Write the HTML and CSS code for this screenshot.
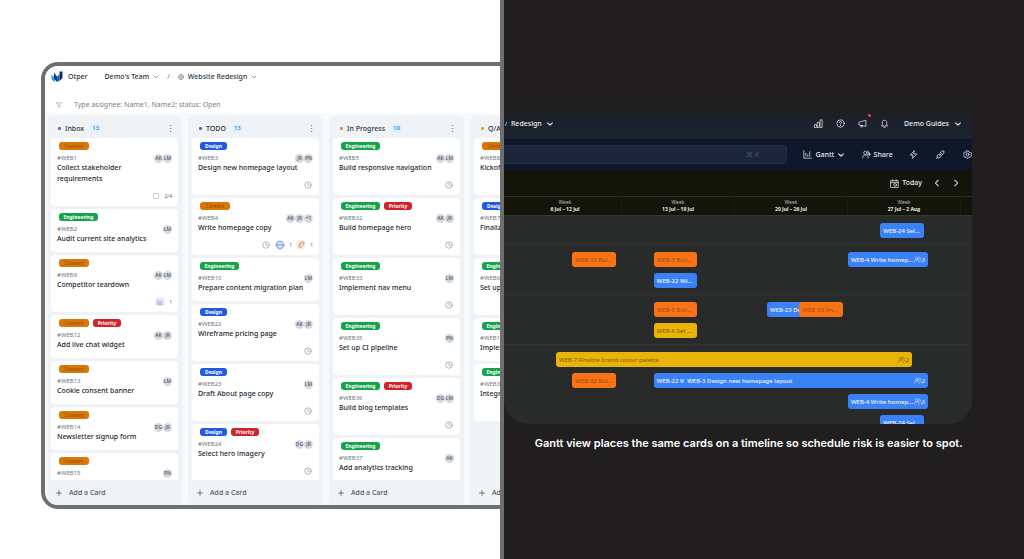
FILE: index.html
```html
<!DOCTYPE html>
<html lang="en">
<head>
<meta charset="utf-8">
<title>Otper – Board and Gantt views</title>
<link rel="stylesheet" href="styles.css">
</head>
<body>
<svg class="sprite" aria-hidden="true">
  <symbol id="chev" viewBox="0 0 10 10"><path d="M2 3.5 5 6.5 8 3.5"/></symbol>
  <symbol id="clock" viewBox="0 0 16 16"><circle cx="8" cy="8" r="6.5"/><path d="M8 4v4.5l3 1"/></symbol>
  <symbol id="plus" viewBox="0 0 10 10"><path d="M5 1v8M1 5h8"/></symbol>
  <symbol id="people" viewBox="0 0 20 16"><circle cx="7" cy="5" r="3.5"/><path d="M1 15c0-4 2-6 6-6s6 2 6 6M13 1.500c3 0 4 5 1 7 3 0 5 3 5 6"/></symbol>
</svg>
<main class="compare">
  <section class="light">
    <div class="board-app">
      <header class="topbar">
        <svg class="logo" viewBox="0 0 24 24"><path d="M1 7l7 6v9l-7-5z" fill="#2aa7e0"/><path d="M6 3l6 8v11l-6-7z" fill="#123a7c"/><path d="M12 11l5-4v12l-5 3z" fill="#1d63c9"/><path d="M17 1h6v13l-6 6z" fill="#0d2f66"/></svg>
        <strong class="brand">Otper</strong>
        <button class="crumb">Demo's Team <svg class="ico s6"><use href="#chev"/></svg></button>
        <span class="slash">/</span>
        <button class="crumb"><svg class="ico s6" viewBox="0 0 16 16"><circle cx="8" cy="8" r="7"/><path d="M1 8h14M8 1c-4 4-4 10 0 14M8 1c4 4 4 10 0 14"/></svg> Website Redesign <svg class="ico s6"><use href="#chev"/></svg></button>
      </header>
      <div class="filter">
        <svg class="ico s6" viewBox="0 0 16 16"><path d="M1 2h14l-5 6v6l-4-2V8z"/></svg>
        <input type="text" aria-label="Filter cards" placeholder="Type assignee: Name1, Name2; status: Open">
      </div>
      <div class="columns">
        <section class="column">
          <header><i class="mark indigo"></i><h2>Inbox</h2><span class="count">13</span><button class="more" aria-label="Inbox menu">⋮</button></header>
          <div class="cards">
            <article class="card"><div class="tags"><span class="tag content">Content</span></div><div class="meta">#WEB1<span class="people"><b>AK</b><b>LM</b></span></div><h3>Collect stakeholder<br>requirements</h3><footer><svg class="ico s6" viewBox="0 0 16 16"><rect x="1.500" y="1.500" width="13" height="13" rx="2"/></svg>2/4</footer></article>
            <article class="card"><div class="tags"><span class="tag eng">Engineering</span></div><div class="meta">#WEB2<span class="people"><b>LM</b></span></div><h3>Audit current site analytics</h3></article>
            <article class="card"><div class="tags"><span class="tag content">Content</span></div><div class="meta">#WEB9<span class="people"><b>AK</b><b>LM</b></span></div><h3>Competitor teardown</h3><footer><span class="badge violet"><svg class="ico s6" viewBox="0 0 16 16"><path d="M2 2v12h12M6 11V7M9 11V8M13 11V4"/></svg></span>1</footer></article>
            <article class="card"><div class="tags"><span class="tag content">Content</span><span class="tag prio">Priority</span></div><div class="meta">#WEB12<span class="people"><b>AK</b><b>JR</b></span></div><h3>Add live chat widget</h3></article>
            <article class="card"><div class="tags"><span class="tag content">Content</span></div><div class="meta">#WEB13<span class="people"><b>LM</b></span></div><h3>Cookie consent banner</h3></article>
            <article class="card"><div class="tags"><span class="tag content">Content</span></div><div class="meta">#WEB14<span class="people"><b>DG</b><b>JR</b></span></div><h3>Newsletter signup form</h3></article>
            <article class="card"><div class="tags"><span class="tag content">Content</span></div><div class="meta">#WEB15<span class="people"><b>PN</b></span></div></article>
          </div>
          <button class="add"><svg class="ico s6"><use href="#plus"/></svg>Add a Card</button>
        </section>
        <section class="column">
          <header><i class="mark slate"></i><h2>TODO</h2><span class="count">13</span><button class="more" aria-label="TODO menu">⋮</button></header>
          <div class="cards">
            <article class="card"><div class="tags"><span class="tag design">Design</span></div><div class="meta">#WEB3<span class="people"><b>JR</b><b>PN</b></span></div><h3>Design new homepage layout</h3><footer><svg class="ico s8"><use href="#clock"/></svg></footer></article>
            <article class="card"><div class="tags"><span class="tag content">Content</span></div><div class="meta">#WEB4<span class="people"><b>AK</b><b>JR</b><b>+1</b></span></div><h3>Write homepage copy</h3><footer><svg class="ico s8"><use href="#clock"/></svg><span class="badge blue"><svg class="ico s8" viewBox="0 0 16 16"><path d="M5 1.500h6L14.500 5v6L11 14.500H5L1.500 11V5zM2 8h12"/></svg></span>1<span class="badge orange"><svg class="ico s8" viewBox="0 0 16 16"><path d="M10 4l-6 6c-1 2 1 4 3 3l6-6c3-4-2-7-5-4l-5 5"/></svg></span>1</footer></article>
            <article class="card"><div class="tags"><span class="tag eng">Engineering</span></div><div class="meta">#WEB10<span class="people"><b>LM</b></span></div><h3>Prepare content migration plan</h3></article>
            <article class="card"><div class="tags"><span class="tag design">Design</span></div><div class="meta">#WEB22<span class="people"><b>AK</b><b>JR</b></span></div><h3>Wireframe pricing page</h3><footer><svg class="ico s8"><use href="#clock"/></svg></footer></article>
            <article class="card"><div class="tags"><span class="tag design">Design</span></div><div class="meta">#WEB23<span class="people"><b>LM</b></span></div><h3>Draft About page copy</h3><footer><svg class="ico s8"><use href="#clock"/></svg></footer></article>
            <article class="card"><div class="tags"><span class="tag design">Design</span><span class="tag prio">Priority</span></div><div class="meta">#WEB24<span class="people"><b>DG</b><b>JR</b></span></div><h3>Select hero imagery</h3><footer><svg class="ico s8"><use href="#clock"/></svg></footer></article>
          </div>
          <button class="add"><svg class="ico s6"><use href="#plus"/></svg>Add a Card</button>
        </section>
        <section class="column">
          <header><i class="mark amber"></i><h2>In Progress</h2><span class="count">10</span><button class="more" aria-label="In Progress menu">⋮</button></header>
          <div class="cards">
            <article class="card"><div class="tags"><span class="tag eng">Engineering</span></div><div class="meta">#WEB5<span class="people"><b>AK</b><b>LM</b></span></div><h3>Build responsive navigation</h3><footer><svg class="ico s8"><use href="#clock"/></svg></footer></article>
            <article class="card"><div class="tags"><span class="tag eng">Engineering</span><span class="tag prio">Priority</span></div><div class="meta">#WEB32<span class="people"><b>AK</b><b>JR</b></span></div><h3>Build homepage hero</h3><footer><svg class="ico s8"><use href="#clock"/></svg></footer></article>
            <article class="card"><div class="tags"><span class="tag eng">Engineering</span></div><div class="meta">#WEB33<span class="people"><b>LM</b></span></div><h3>Implement nav menu</h3><footer><svg class="ico s8"><use href="#clock"/></svg></footer></article>
            <article class="card"><div class="tags"><span class="tag eng">Engineering</span></div><div class="meta">#WEB35<span class="people"><b>PN</b></span></div><h3>Set up CI pipeline</h3><footer><svg class="ico s8"><use href="#clock"/></svg></footer></article>
            <article class="card"><div class="tags"><span class="tag eng">Engineering</span><span class="tag prio">Priority</span></div><div class="meta">#WEB36<span class="people"><b>DG</b><b>LM</b></span></div><h3>Build blog templates</h3><footer><svg class="ico s8"><use href="#clock"/></svg></footer></article>
            <article class="card"><div class="tags"><span class="tag eng">Engineering</span></div><div class="meta">#WEB37<span class="people"><b>AK</b></span></div><h3>Add analytics tracking</h3></article>
          </div>
          <button class="add"><svg class="ico s6"><use href="#plus"/></svg>Add a Card</button>
        </section>
        <section class="column">
          <header><i class="mark olive"></i><h2>Q/A</h2></header>
          <div class="cards">
            <article class="card"><div class="tags"><span class="tag content">Content</span></div><div class="meta">#WEB8</div><h3>Kickoff</h3><footer></footer></article>
            <article class="card"><div class="tags"><span class="tag design">Design</span></div><div class="meta">#WEB7</div><h3>Finalize</h3><footer></footer></article>
            <article class="card"><div class="tags"><span class="tag eng">Engineering</span></div><div class="meta">#WEB6</div><h3>Set up</h3><footer></footer></article>
            <article class="card"><div class="tags"><span class="tag eng">Engineering</span></div><div class="meta">#WEB11</div><h3>Implement</h3></article>
            <article class="card"><div class="tags"><span class="tag eng">Engineering</span></div><div class="meta">#WEB34</div><h3>Integrate</h3><footer></footer></article>
          </div>
          <button class="add"><svg class="ico s6"><use href="#plus"/></svg>Add a Card</button>
        </section>
      </div>
    </div>
  </section>
  <section class="dark">
    <div class="gantt-app">
      <header class="gtop">
        <button class="project"><small>/</small> Redesign <svg class="ico s8"><use href="#chev"/></svg></button>
        <nav class="tools">
          <button aria-label="Reports"><svg class="ico s9" viewBox="0 0 16 16"><path d="M1.500 10h3v5h-3zM6.500 6h3v9h-3zM11.500 1.500h3V15h-3z"/></svg></button>
          <button aria-label="Help"><svg class="ico s9" viewBox="0 0 16 16"><circle cx="8" cy="8" r="6.500"/><path d="M6 6.500c0-3 4-3 4-.5 0 1.500-2 1.500-2 3M8 11v1"/></svg></button>
          <button class="news" aria-label="News"><svg class="ico s9" viewBox="0 0 16 16"><path d="M1.500 6.500v4L14 13V3zM5 11v3h3v-2"/></svg></button>
          <button aria-label="Notifications"><svg class="ico s9" viewBox="0 0 16 16"><path d="M3 12c2-2 1-4 1-6 0-5 8-5 8 0 0 2-1 4 1 6zM6.500 14.500h3"/></svg></button>
        </nav>
        <button class="user">Demo Guides <svg class="ico s8"><use href="#chev"/></svg></button>
      </header>
      <div class="gbar">
        <input class="search" type="text" aria-label="Search" placeholder="⌘ K">
        <button><svg class="ico s9" viewBox="0 0 16 16"><path d="M1.500 1v13.500H15M5 11V6M8.500 11V8M12 11V3"/></svg>Gantt <svg class="ico s8"><use href="#chev"/></svg></button>
        <button><svg class="ico s9" viewBox="0 0 16 16"><circle cx="6" cy="5" r="3"/><path d="M1 14c0-4 2-5 5-5s5 1 5 5M10 2c3 0 3 5 0 6M13 5v5M11 7.500h4.500"/></svg>Share</button>
        <div class="actions">
        <button aria-label="Automations"><svg class="ico s9" viewBox="0 0 16 16"><path d="M9 1.500 2 9h5l-1 6 8-8H9z"/></svg></button>
        <button aria-label="Integrations"><svg class="ico s9" viewBox="0 0 16 16"><path d="M7 6l3-4 4-.5V6l-4 3zM9 10l-3 4H2v-4l4-3M1 15l2-2M6 10l4-4"/></svg></button>
        <button aria-label="Settings"><svg class="ico s9" viewBox="0 0 16 16"><circle cx="8" cy="8" r="2.500"/><path d="M6.500 1.500h3l.5 2 2 1 2-.5 1.500 3L14 8.500l1 1.500-2 3-2-.5-1.500 2h-3l-1-2-2.500.5-2-3L2.500 8 1 6.500l1.500-3L5 4l1-.5z"/></svg></button>
        </div>
      </div>
      <div class="range">
        <button><svg class="ico s9" viewBox="0 0 16 16"><path d="M1.500 3h13v12h-13zM1.500 6.500h13M5 1v3M11 1v3"/><circle cx="9" cy="10.500" r="2.500"/></svg>Today</button>
        <button aria-label="Previous"><svg class="ico s8" viewBox="0 0 10 10"><path d="M6.500 1.500 3 5l3.500 3.500"/></svg></button>
        <button aria-label="Next"><svg class="ico s8" viewBox="0 0 10 10"><path d="M3.500 1.500 7 5 3.500 8.500"/></svg></button>
      </div>
      <div class="weeks">
        <div>Week<b>6 Jul – 12 Jul</b></div>
        <div>Week<b>13 Jul – 19 Jul</b></div>
        <div>Week<b>20 Jul – 26 Jul</b></div>
        <div>Week<b>27 Jul – 2 Aug</b></div>
      </div>
      <div class="lanes">
        <div class="lane"><div class="row"><span class="bar blue" style="left:80.4%;width:9.3%">WEB-24 Sel...</span></div></div>
        <div class="lane">
          <div class="row"><span class="bar orange" style="left:14.6%;width:9.3%">WEB-32 Bui...</span><span class="bar orange" style="left:32%;width:9.3%">WEB-5 Buil...</span><span class="bar blue" style="left:73.5%;width:17.1%">WEB-4 Write homep...<em><svg class="ico s7"><use href="#people"/></svg>3</em></span></div>
          <div class="row"><span class="bar blue" style="left:32%;width:9.3%">WEB-22 Wi...</span></div>
        </div>
        <div class="lane">
          <div class="row"><span class="bar orange" style="left:32%;width:9.3%">WEB-5 Buil...</span><span class="bar blue" style="left:56.2%;width:9.3%">WEB-23 Dr...</span><span class="bar orange" style="left:63.1%;width:9.3%">WEB-33 Im...</span></div>
          <div class="row"><span class="bar yellow" style="left:32%;width:9.3%">WEB-6 Set ...</span></div>
        </div>
        <div class="lane">
          <div class="row"><span class="bar yellow" style="left:11.1%;width:76.1%">WEB-7 Finalize brand colour palette<em><svg class="ico s7"><use href="#people"/></svg>2</em></span></div>
          <div class="row"><span class="bar orange" style="left:14.6%;width:9.3%">WEB-32 Bui...</span><span class="bar blue" style="left:32%;width:9.3%">WEB-22 W</span><span class="bar blue" style="left:38.5%;width:52.1%">WEB-3 Design new homepage layout<em><svg class="ico s7"><use href="#people"/></svg>2</em></span></div>
          <div class="row"><span class="bar blue" style="left:73.5%;width:17.1%">WEB-4 Write homep...<em><svg class="ico s7"><use href="#people"/></svg>3</em></span></div>
          <div class="row"><span class="bar blue" style="left:80.4%;width:9.3%">WEB-24 Sel...</span></div>
        </div>
      </div>
    </div>
    <p class="caption">Gantt view places the same cards on a timeline so schedule risk is easier to spot.</p>
  </section>
</main>
</body>
</html>
```
FILE: styles.css
```css
* { box-sizing: border-box; }
body { margin: 0; font: 7px/10px "Noto Sans", "Open Sans", sans-serif; color: #2b3440; background: #fff; }
button, input { font: inherit; color: inherit; background: none; border: 0; padding: 0; margin: 0; }
button { display: inline-flex; align-items: center; white-space: nowrap; }
h2, h3, p { margin: 0; }
.sprite { display: none; }
.ico { fill: none; stroke: currentColor; stroke-width: 1.3; stroke-linecap: round; stroke-linejoin: round; flex: none; }
.s6 { width: 6px; height: 6px; }
.s7 { width: 8px; height: 7px; }
.s8 { width: 8px; height: 8px; }
.s9 { width: 9px; height: 9px; }

.compare { display: grid; grid-template-columns: 504fr 520fr; height: 100vh; overflow: hidden; }
.light { min-width: 0; display: flex; padding: 62px 0 50px 41px; border-right: 4px solid #6f6f6f; overflow: hidden; }
.dark { min-width: 0; background: #201e1f; padding-top: 108px; color: #e8ebef; }

/* Board view */
.board-app { flex: 1; min-width: 0; display: flex; flex-direction: column; overflow: hidden; background: #f7fafc; border: 4px solid #6f6f6f; border-right: 0; border-radius: 17px 0 0 17px; }
.topbar { display: flex; align-items: center; height: 31px; padding: 0 0 10px 6px; background: #fff; font-weight: 500; }
.logo { width: 12px; height: 12px; margin-right: 5px; }
.brand { margin-right: 17px; font-weight: 500; }
.crumb { gap: 4px; color: #2b3440; }
.crumb .ico { color: #6b7280; }
.slash { margin: 0 8px; color: #6b7280; font-weight: 400; }
.filter { display: flex; align-items: center; gap: 12px; height: 16px; padding-left: 11px; margin-bottom: 3px; background: #fff; color: #7a828c; }
.filter input { flex: 1; min-width: 0; }
.filter input::placeholder { color: #7a828c; }
.columns { flex: 1; min-height: 0; display: flex; gap: 6px; padding-left: 2px; }
.column { flex: 0 0 135px; display: flex; flex-direction: column; background: #f0f3f6; border-radius: 5px; padding: 0 4px; }
.column > header { display: flex; align-items: center; height: 22px; flex: none; padding: 3px 3px 0 7px; }
.mark { width: 3px; height: 3px; border-radius: 1px; margin-right: 4px; }
.indigo { background: #5b6fb8; }
.slate { background: #5f7488; }
.amber { background: #e88a3c; }
.olive { background: #c0b52c; }
.column h2 { font-size: 7px; font-weight: 500; line-height: 10px; }
.count { margin-left: 6px; padding: 0 2px; border-radius: 3px; background: #e0f0fd; color: #2478cf; font-weight: 500; font-size: 6px; line-height: 9px; }
.more { margin-left: auto; font-size: 9px; color: #5a626c; }
.cards { flex: 1; min-height: 0; overflow: hidden; display: flex; flex-direction: column; gap: 3px; }
.card { flex: none; background: #fff; border-radius: 4px; padding: 4px 6px 8px; }
.card:has(footer) { padding-bottom: 6px; }
.tags { display: flex; gap: 4px; padding-left: 2px; margin-bottom: 5px; }
.tag { height: 8px; border-radius: 3px; font-size: 5px; line-height: 8px; font-weight: 700; color: #fff; text-align: center; }
.content { background: #d97706; color: #8f4d08; width: 30px; font-weight: 400; }
.eng { background: #16a34a; width: 39px; }
.design { background: #2159e0; width: 27px; }
.prio { background: #d3222a; width: 28px; }
.meta { display: flex; align-items: center; justify-content: space-between; height: 7px; font-size: 6px; line-height: 7px; color: #717983; }
.people { display: flex; }
.people b { width: 9px; height: 9px; border-radius: 50%; background: #d5d9e0; color: #4b5563; font-size: 5px; font-weight: 500; line-height: 9px; text-align: center; }
.card h3 { font-size: 7px; line-height: 11px; font-weight: 500; white-space: nowrap; color: #20262f; }
.card footer { display: flex; align-items: center; justify-content: flex-end; gap: 4px; height: 9px; margin-top: 7px; font-size: 5px; color: #5d6570; }
.card footer > .ico { color: #8b929c; margin-right: 1px; }
.badge { display: flex; align-items: center; justify-content: center; width: 10px; height: 10px; border-radius: 50%; }
.violet { background: #efe9fc; color: #8164c9; }
.badge.blue { background: #e0eafd; color: #3969c9; }
.badge.orange { background: #fdebdc; color: #b96a2c; }
.add { flex: none; height: 25px; gap: 7px; padding-left: 5px; font-weight: 500; color: #4f5761; }

/* Gantt view */
.gantt-app { width: 90%; height: 316px; display: flex; flex-direction: column; overflow: hidden; border-radius: 0 0 24px 24px; background: #292b2b; }
.gtop, .gbar { display: flex; align-items: center; flex: none; font-weight: 500; }
.gtop { height: 31px; background: linear-gradient(#201e1f, #1c222c 40%, #1b2330); padding-right: 10px; }
.project { gap: 4px; padding-left: 1px; }
.project small { font-size: 5px; }
.tools { display: flex; gap: 13px; margin-left: auto; margin-right: 15px; }
.news { position: relative; }
.news::after { content: ""; position: absolute; top: -5px; right: -4px; width: 3px; height: 3px; border-radius: 50%; background: #ef4444; }
.user { gap: 5px; }
.gbar { height: 31px; background: #0f172a; overflow: hidden; justify-content: space-between; }
.gbar button { gap: 3px; flex: none; }
.search { flex: 0 0 60.5%; height: 19px; background: #1b2638; border: 1px solid #253044; border-left: 0; border-radius: 0 4px 4px 0; text-align: right; padding-right: 27px; }
.search::placeholder { color: #465268; font-weight: 400; }
.actions { display: flex; gap: 18px; }
.range { flex: none; height: 26px; display: flex; align-items: center; justify-content: flex-end; gap: 11px; padding-right: 12px; background: #14150a; font-size: 7px; font-weight: 500; }
.range button { gap: 3px; }
.weeks { flex: none; height: 20px; display: grid; grid-template-columns: repeat(4, 113px) 1fr; padding-left: 5px; background: #14150a; border-top: 1px solid #2c2e22; border-bottom: 1px solid #34372c; text-align: center; font-size: 5px; line-height: 7px; color: #b8bbb5; }
.weeks div { padding-top: 2px; border-right: 1px solid #1b1d13; }
.weeks b { display: block; color: #eceeea; font-weight: 700; }
.lanes { flex: 1; overflow: hidden; }
.lane { display: flex; flex-direction: column; gap: 6px; padding: 7px 0 6px; border-bottom: 1px solid #2f3232; }
.row { position: relative; height: 15px; }
.bar { position: absolute; top: 0; height: 15px; border-radius: 3px; padding: 0 3px; display: flex; align-items: center; justify-content: space-between; font-size: 6px; font-weight: 500; white-space: nowrap; overflow: hidden; color: #f2f6ff; }
.bar.blue { background: #3b82f6; }
.bar.orange { background: #f97316; color: #a14a16; font-weight: 400; }
.bar.yellow { background: #eab308; color: #79600f; font-weight: 400; }
.bar em { display: flex; align-items: center; font-style: normal; font-weight: 400; }
.caption { padding: 11px 0 0 11px; width: 92%; text-align: center; white-space: nowrap; font: 600 11px/16px Inter, "Open Sans", sans-serif; color: #fff; }
```
